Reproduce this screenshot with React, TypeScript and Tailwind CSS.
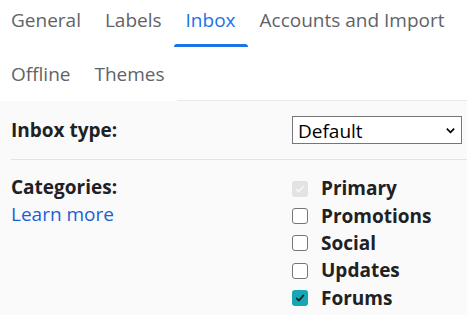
import { useState } from 'react';

const FONT = "font-['Open_Sans','Noto_Sans',sans-serif]";

const ROW1 = ['General', 'Labels', 'Inbox', 'Accounts and Import'];
const ROW2 = ['Offline', 'Themes'];

const CATEGORIES = [
  { name: 'Primary', checked: true, disabled: true },
  { name: 'Promotions', checked: false },
  { name: 'Social', checked: false },
  { name: 'Updates', checked: false },
  { name: 'Forums', checked: true },
];

function Tab({ label, active }: { label: string; active?: boolean }) {
  return (
    <div className="relative h-[54px] px-3 flex items-center">
      <span className={active ? 'text-[#1a73e8]' : 'text-[#5f6368]'}>{label}</span>
      {active && <div className="absolute left-0 right-0 bottom-0 h-[3px] bg-[#1a73e8] rounded-t-sm" />}
    </div>
  );
}

function Box({ checked, disabled }: { checked: boolean; disabled?: boolean }) {
  if (disabled) {
    return (
      <div className="w-4 h-4 rounded-[3px] bg-[#e3e3e3] flex items-center justify-center">
        <svg viewBox="0 0 16 16" className="w-3 h-3">
          <path d="M3.5 8.5l3 3 6-7" fill="none" stroke="#f5f5f5" strokeWidth="2.2" strokeLinecap="round" strokeLinejoin="round" />
        </svg>
      </div>
    );
  }
  if (checked) {
    return (
      <div className="w-4 h-4 rounded-[3px] bg-[#16a6b6] flex items-center justify-center">
        <svg viewBox="0 0 16 16" className="w-3 h-3">
          <path d="M3.5 8.5l3 3 6-7" fill="none" stroke="#202124" strokeWidth="2.2" strokeLinecap="round" strokeLinejoin="round" />
        </svg>
      </div>
    );
  }
  return <div className="w-4 h-4 rounded-[3px] border border-[#767676] bg-white" />;
}

export default function App() {
  const [cats, setCats] = useState(CATEGORIES);

  return (
    <div className={`${FONT} w-[467px] h-[315px] overflow-hidden bg-[#fafafa] text-[19px] text-[#202124]`}>
      {/* Tabs */}
      <div className="bg-white -mt-[7px]">
        <div className="flex -ml-px">
          {ROW1.map((t) => (
            <Tab key={t} label={t} active={t === 'Inbox'} />
          ))}
        </div>
        <div className="flex -ml-px">
          {ROW2.map((t) => (
            <Tab key={t} label={t} />
          ))}
          <div className="flex-1 border-b border-[#e8eaed]" />
        </div>
      </div>

      {/* Inbox type */}
      <div className="ml-[11px] h-[59px] flex items-center border-b border-[#e3e3e3]">
        <span className="font-bold flex-1">Inbox type:</span>
        <div className="relative w-[170px] h-7 mr-[5px]">
          <select className="appearance-none w-full h-full border border-[#767676] bg-white pl-[5px] text-[19px] text-[#000] outline-none">
            <option>Default</option>
          </select>
          <svg viewBox="0 0 12 12" className="absolute right-[6px] top-[9px] w-[11px] h-[11px] pointer-events-none">
            <path d="M2 4l4 4 4-4" fill="none" stroke="#000" strokeWidth="1.8" />
          </svg>
        </div>
      </div>

      {/* Categories */}
      <div className="ml-[11px] pt-[15px] flex">
        <div className="flex-1 leading-[27px] -mt-px">
          <div className="font-bold">Categories:</div>
          <a className="text-[#1a5fd6]">Learn more</a>
        </div>
        <div className="w-[175px] flex flex-col">
          {cats.map((c, i) => (
            <label
              key={c.name}
              className="h-[27.3px] flex items-center gap-[13px] font-bold"
              onClick={() => {
                if (c.disabled) return;
                setCats(cats.map((x, j) => (j === i ? { ...x, checked: !x.checked } : x)));
              }}
            >
              <Box checked={c.checked} disabled={c.disabled} />
              <span>{c.name}</span>
            </label>
          ))}
        </div>
      </div>
    </div>
  );
}
